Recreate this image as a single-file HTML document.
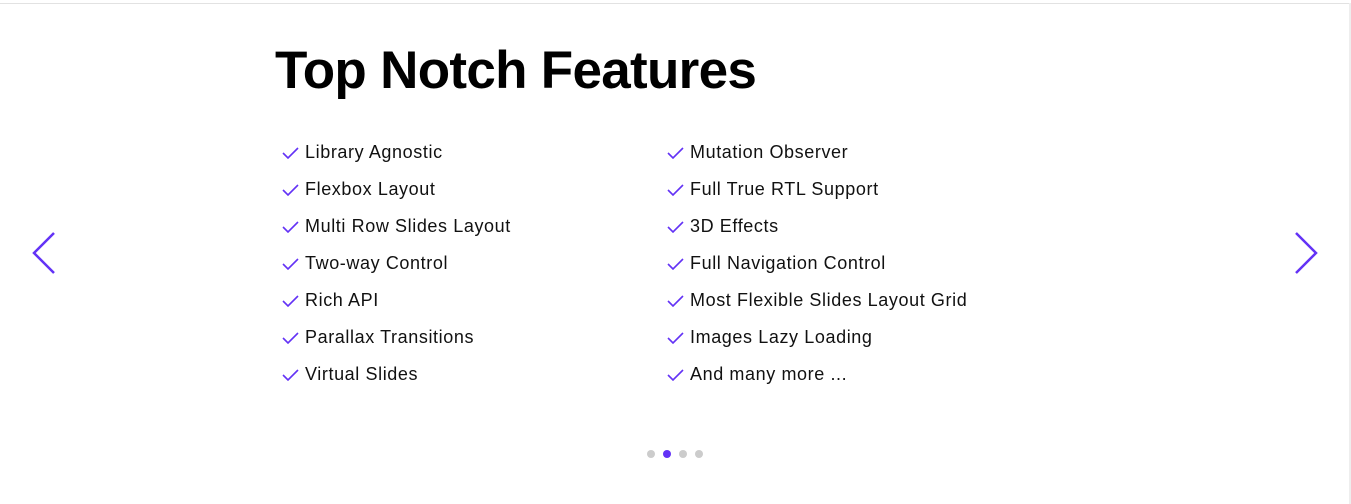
<!DOCTYPE html>
<html><head><style>
body{margin:0;width:1351px;height:504px;background:#fff;position:relative;overflow:hidden;font-family:"Liberation Sans",sans-serif;}
.top{position:absolute;left:0;top:3px;width:1351px;height:1px;background:#e2e2e2}
.right{position:absolute;left:1349px;top:3px;width:2px;height:501px;background:#eeeeee}
h1{position:absolute;left:275px;top:40px;margin:0;font-size:53px;font-weight:bold;color:#000;letter-spacing:-0.7px;line-height:62px}
.item{position:absolute;font-size:18px;color:#111;line-height:22px;height:22px;letter-spacing:0.6px}
.item svg{position:absolute;left:-23px;top:6px}
.dot{position:absolute;top:450px;width:8px;height:8px;border-radius:50%;background:#ccc}
</style></head><body>
<div class="top"></div><div class="right"></div>
<h1>Top Notch Features</h1>
<svg style="position:absolute;left:30px;top:230px" width="28" height="46"><path d="M24 3 L4 23 L24 43" fill="none" stroke="#6332f6" stroke-width="2.5"/></svg>
<svg style="position:absolute;left:1292px;top:230px" width="28" height="46"><path d="M4 3 L24 23 L4 43" fill="none" stroke="#6332f6" stroke-width="2.5"/></svg>
<div id="l"></div>
<script>
var a=["Library Agnostic","Flexbox Layout","Multi Row Slides Layout","Two-way Control","Rich API","Parallax Transitions","Virtual Slides"];
var b=["Mutation Observer","Full True RTL Support","3D Effects","Full Navigation Control","Most Flexible Slides Layout Grid","Images Lazy Loading","And many more ..."];
var chk='<svg width="17" height="12"><path d="M1 6 L6 11 L16 1" fill="none" stroke="#6332f6" stroke-width="1.6"/></svg>';
var h="";
for(var i=0;i<7;i++){var t=141+i*37;
h+='<div class="item" style="left:305px;top:'+t+'px">'+chk+a[i]+'</div>';
h+='<div class="item" style="left:690px;top:'+t+'px">'+chk+b[i]+'</div>';}
document.getElementById("l").innerHTML=h;
</script>
<div class="dot" style="left:647px"></div>
<div class="dot" style="left:663px;background:#6332f6"></div>
<div class="dot" style="left:679px"></div>
<div class="dot" style="left:695px"></div>
</body></html>
